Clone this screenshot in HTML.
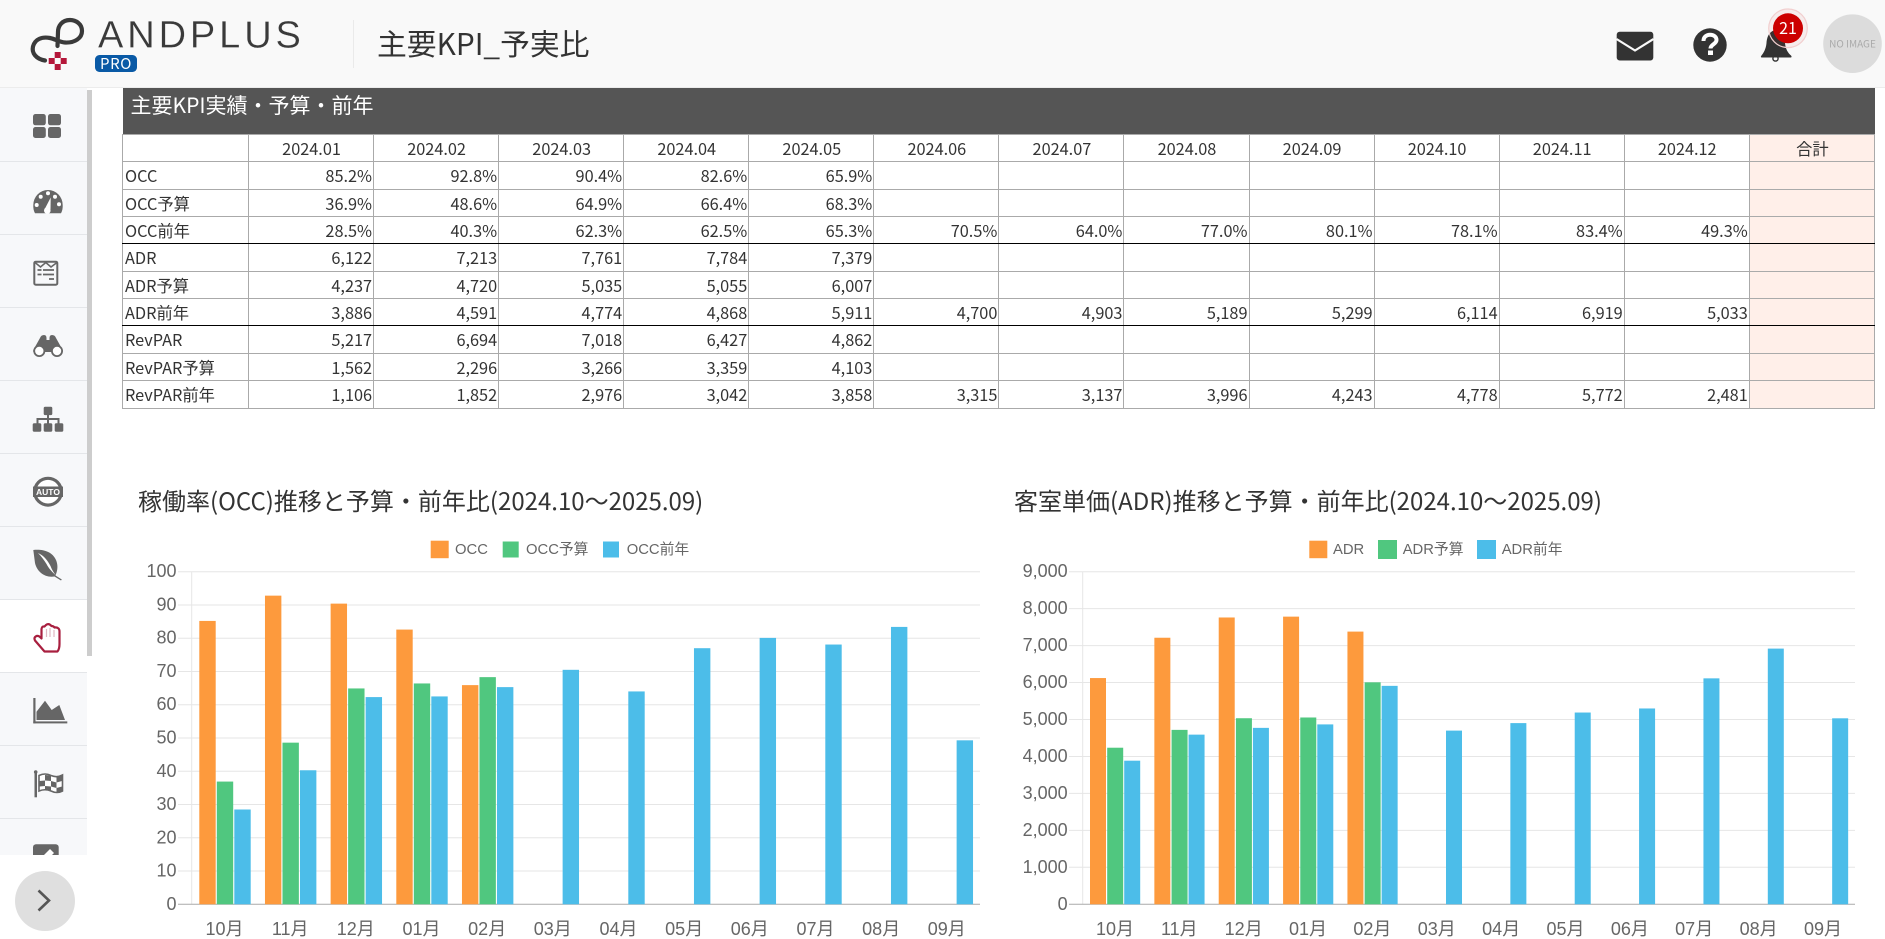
<!DOCTYPE html>
<html lang="ja">
<head>
<meta charset="utf-8">
<title>主要KPI_予実比</title>
<style>
html,body{margin:0;padding:0;width:1885px;height:939px;overflow:hidden;background:#fff}
body{position:relative;font-family:"Noto Sans CJK JP","Liberation Sans",sans-serif;color:#333}
#hdr{position:absolute;left:0;top:0;width:1885px;height:87px;background:#f9f9f9;border-bottom:1px solid #ececec}
#side{position:absolute;left:0;top:88px;width:87px;height:767px;background:#f7f8fa}
.sep{position:absolute;left:0;width:87px;height:1px;background:#e4e6e9}
#active{position:absolute;left:0;top:600px;width:87px;height:72px;background:#fff}
#bar{position:absolute;left:87px;top:90px;width:4.5px;height:566px;background:#cdcdcd}
#ttl{position:absolute;left:122.5px;top:88px;width:1752px;height:46px;background:#555;color:#fff;font-size:21px;line-height:34px;box-sizing:border-box;padding-left:8px}
table{position:absolute;left:122px;top:134px;width:1753px;border-collapse:collapse;table-layout:fixed;font-size:16.3px;color:#333;background:#fff}
td{border:1px solid #aaa;padding:0 1px 1px 2px;text-align:right;white-space:nowrap;line-height:20px;overflow:hidden}
tr.h td{text-align:center}
td:first-child{text-align:left}
td:last-child{background:#ffefe9}
tr.k td{border-bottom:1px solid #000}
svg{position:absolute;left:0;top:0}
.tk{font-family:"Liberation Sans","Noto Sans CJK JP",sans-serif;font-size:18px;fill:#666}
.lg{font-family:"Liberation Sans","Noto Sans CJK JP",sans-serif;font-size:14.8px;fill:#666}
.ct{font-family:"Noto Sans CJK JP","Liberation Sans",sans-serif;font-size:24px;fill:#333}
</style>
</head>
<body>
<div id="hdr"></div>
<div id="side">
<div class="sep" style="top:73px"></div><div class="sep" style="top:146px"></div><div class="sep" style="top:219px"></div><div class="sep" style="top:292px"></div><div class="sep" style="top:365px"></div><div class="sep" style="top:438px"></div><div class="sep" style="top:511px"></div><div class="sep" style="top:584px"></div><div class="sep" style="top:657px"></div><div class="sep" style="top:730px"></div>
</div>
<div id="active"></div>
<div id="bar"></div>
<div id="ttl">主要KPI実績・予算・前年</div>
<table>
<colgroup><col style="width:126px"><col><col><col><col><col><col><col><col><col><col><col><col><col></colgroup>
<tr class="h" style="height:27px"><td></td><td>2024.01</td><td>2024.02</td><td>2024.03</td><td>2024.04</td><td>2024.05</td><td>2024.06</td><td>2024.07</td><td>2024.08</td><td>2024.09</td><td>2024.10</td><td>2024.11</td><td>2024.12</td><td>合計</td></tr>
<tr style="height:28px"><td>OCC</td><td>85.2%</td><td>92.8%</td><td>90.4%</td><td>82.6%</td><td>65.9%</td><td></td><td></td><td></td><td></td><td></td><td></td><td></td><td></td></tr>
<tr style="height:27px"><td>OCC予算</td><td>36.9%</td><td>48.6%</td><td>64.9%</td><td>66.4%</td><td>68.3%</td><td></td><td></td><td></td><td></td><td></td><td></td><td></td><td></td></tr>
<tr class="k" style="height:27px"><td>OCC前年</td><td>28.5%</td><td>40.3%</td><td>62.3%</td><td>62.5%</td><td>65.3%</td><td>70.5%</td><td>64.0%</td><td>77.0%</td><td>80.1%</td><td>78.1%</td><td>83.4%</td><td>49.3%</td><td></td></tr>
<tr style="height:28px"><td>ADR</td><td>6,122</td><td>7,213</td><td>7,761</td><td>7,784</td><td>7,379</td><td></td><td></td><td></td><td></td><td></td><td></td><td></td><td></td></tr>
<tr style="height:27px"><td>ADR予算</td><td>4,237</td><td>4,720</td><td>5,035</td><td>5,055</td><td>6,007</td><td></td><td></td><td></td><td></td><td></td><td></td><td></td><td></td></tr>
<tr class="k" style="height:27px"><td>ADR前年</td><td>3,886</td><td>4,591</td><td>4,774</td><td>4,868</td><td>5,911</td><td>4,700</td><td>4,903</td><td>5,189</td><td>5,299</td><td>6,114</td><td>6,919</td><td>5,033</td><td></td></tr>
<tr style="height:28px"><td>RevPAR</td><td>5,217</td><td>6,694</td><td>7,018</td><td>6,427</td><td>4,862</td><td></td><td></td><td></td><td></td><td></td><td></td><td></td><td></td></tr>
<tr style="height:27px"><td>RevPAR予算</td><td>1,562</td><td>2,296</td><td>3,266</td><td>3,359</td><td>4,103</td><td></td><td></td><td></td><td></td><td></td><td></td><td></td><td></td></tr>
<tr style="height:28px"><td>RevPAR前年</td><td>1,106</td><td>1,852</td><td>2,976</td><td>3,042</td><td>3,858</td><td>3,315</td><td>3,137</td><td>3,996</td><td>4,243</td><td>4,778</td><td>5,772</td><td>2,481</td><td></td></tr>
</table>

<svg width="1885" height="939" viewBox="0 0 1885 939" xmlns="http://www.w3.org/2000/svg">
<!-- logo -->
<path d="M45 60.5C36 59 31.5 53 33 46.5C35 39 42 36.5 50 38C55 39 60 42.5 65 42.5C75 43 82 38 82 31C82 24 76 20 70 20C62 20 58 26 58 32L57.5 46" fill="none" stroke="#3a3a3a" stroke-width="4.2" stroke-linecap="round"/>
<g fill="#b5173a"><rect x="54.7" y="52" width="6" height="6"/><rect x="48.700" y="58" width="6" height="6"/><rect x="60.7" y="58" width="6" height="6"/><rect x="54.7" y="64" width="6" height="6"/></g>
<text x="98" y="47.500" font-family="Liberation Sans,sans-serif" font-size="38" letter-spacing="3.9" fill="#3a3a3a" stroke="#f9f9f9" stroke-width=".25" paint-order="fill stroke">ANDPLUS</text>
<rect x="95" y="55" width="42" height="17" rx="4.5" fill="#0a5aa6"/>
<text x="116" y="69" text-anchor="middle" font-family="Noto Sans CJK JP,sans-serif" font-size="15" letter-spacing=".6" fill="#fff">PRO</text>
<rect x="353" y="20" width="1" height="48" fill="#eaeaea"/>
<text x="377" y="55" font-family="Noto Sans CJK JP,Liberation Sans,sans-serif" font-size="29.8" fill="#333">主要KPI_予実比</text>

<!-- header right -->
<rect x="1616.7" y="31.7" width="36.6" height="28.8" rx="3" fill="#333"/>
<path d="M1616.5 39L1635 50.5L1653.5 39" fill="none" stroke="#f9f9f9" stroke-width="2.2"/>
<circle cx="1710" cy="45" r="16.7" fill="#333"/>
<path d="M1703.5 41C1703.5 36.5 1707 34.7 1710 34.7C1714 34.7 1716.5 37 1716.5 40C1716.5 44 1710.5 44.5 1710.5 48.5" fill="none" stroke="#fff" stroke-width="4"/>
<rect x="1708" y="50.5" width="5" height="4.5" fill="#fff"/>
<path d="M1776 30C1769 31 1767 37 1766.500 43C1766 49 1763.500 53 1761.500 55.500Q1760 57.500 1762 57.500L1790 57.500Q1792.500 57.500 1791 55.500C1788 53 1785.500 49 1785 43C1785 37 1783 31 1776 30Z" fill="#333"/>
<circle cx="1775.5" cy="58.5" r="2.6" fill="none" stroke="#333" stroke-width="1.4"/>
<circle cx="1788" cy="28.3" r="19.3" fill="#c00" fill-opacity=".05" stroke="#f2cfcf" stroke-width="1.2"/>
<circle cx="1788" cy="28.3" r="15" fill="#cc0000"/>
<text x="1788" y="34" text-anchor="middle" font-family="Noto Sans CJK JP,sans-serif" font-size="16" fill="#fff">21</text>
<circle cx="1852.5" cy="43.7" r="29.3" fill="#dcdcdc"/>
<text x="1852.5" y="47.3" text-anchor="middle" font-family="Noto Sans CJK JP,sans-serif" font-size="10" fill="#aaa">NO IMAGE</text>

<!-- side icons -->
<g fill="#666">
<rect x="33" y="114" width="12.8" height="11.3" rx="2.5"/><rect x="48" y="114" width="13" height="11.3" rx="2.5"/><rect x="33" y="127" width="12.8" height="11" rx="2.5"/><rect x="48" y="127" width="13" height="11" rx="2.5"/>
<path d="M35 213.3Q33 209.5 33.3 205A14.7 15 0 0 1 62.7 205Q63 209.5 61 213.3Z"/>
<path d="M33.3 350L40 338Q41 335 44 335Q46.5 335 46.5 338L46.5 340L49.5 340L49.5 338Q49.5 335 52 335Q55 335 56 338L62.7 350L62.7 352L33.3 352Z"/>
<circle cx="39.3" cy="351" r="6"/><circle cx="57" cy="351" r="6"/>
<rect x="43.7" y="406.7" width="8.6" height="8.4" rx="1.5"/><rect x="32.7" y="423.3" width="8.6" height="8.4" rx="1.5"/><rect x="43.7" y="423.3" width="8.6" height="8.4" rx="1.5"/><rect x="54.7" y="423.3" width="8.6" height="8.4" rx="1.5"/>
<path d="M47 415h2v3h10.500v5.500h-2V420H49v3.500h-2V420H38.500v3.500h-2V418H47z"/>
<circle cx="48" cy="491.7" r="15"/>
<path d="M33.3 550C42 549 52 551 56 560C59 567 56.5 573 55.5 575.5L61.8 579.5L61 580.5L54.5 576.5C45 578 37 572 35 563Z"/>
<path d="M36.5 720V711.7L45 700.7L51.7 710L59.3 705L65 720Z"/>
<rect x="33.3" y="698" width="2.2" height="25.3"/><rect x="33.3" y="721.4" width="34" height="2"/>
<rect x="34.5" y="772" width="2.5" height="25.3"/><circle cx="35.7" cy="772" r="1.8"/>
<rect x="33" y="844.3" width="25.7" height="18" rx="3"/>
</g>
<g fill="#fff">
<circle cx="40.7" cy="196.7" r="2"/><circle cx="48" cy="193.3" r="2"/><circle cx="55" cy="196.7" r="2"/><circle cx="36.7" cy="205" r="2"/><circle cx="59" cy="204.3" r="2"/>
<path d="M50.7 197.5L50.5 209.500L44.500 209.500Z"/><circle cx="47.3" cy="210.500" r="3.300"/>
<circle cx="39.3" cy="351" r="4.2"/><circle cx="57" cy="351" r="4.2"/>
<circle cx="48" cy="491.7" r="11.8"/>
<path d="M38 553C44 555.500 48 561 50.500 566C52 570 54 573 55.700 575C52 572 48.500 568 46.500 564C44 560 41 556 38 553Z"/>
<path d="M42 857l8-8 4 4-8 8z"/>
</g>
<rect x="33" y="486.5" width="30" height="10.5" fill="#666"/>
<text x="48" y="495" text-anchor="middle" font-family="Liberation Sans,sans-serif" font-weight="bold" font-size="8.5" fill="#fff">AUTO</text>
<!-- flag -->
<path d="M39 775.500Q45 772.500 51 775.500Q57 778 62.500 775V791Q57 794 51 791Q45 788.500 39 791Z" fill="#fff" stroke="#666" stroke-width="1.600"/>
<path d="M45 775L51 775.500V781L45 780.500ZM56.500 777L62 775.500V781L56.500 782.500ZM39.500 781L45 780.500V786L39.500 786.500ZM51 781L56.500 782.500V788L51 786.500ZM45 786L51 786.500V791L45 790ZM56.500 788L62 786.500V791L56.500 792.500Z" fill="#666"/>
<!-- form icon -->
<rect x="34.3" y="261.7" width="23" height="23" rx="1.5" fill="none" stroke="#666" stroke-width="2"/>
<path d="M35 262.5L40.500 267L45.800 262.500L51 267L57 262.500" fill="none" stroke="#666" stroke-width="1.6"/>
<path d="M37.5 270h4M43 270h11M37.5 274.5h4M43 274.5h11M49 279h5" stroke="#666" stroke-width="1.8" fill="none"/>
<!-- hand -->
<path d="M44.5 651.5L35 640.5Q33.5 637.5 36.5 636Q39 635.5 41 638L41.5 638.5V629Q42 626 44.5 626.5L46 625Q48 623.5 50 624.7L51.5 626Q53.5 626 54.5 627.5Q57 627 58.5 628.5Q59.5 629.5 59.5 631.5V644Q59.5 649 57.5 651.5Z" fill="#fff" stroke="#a81f3f" stroke-width="2.2" stroke-linejoin="round"/>
<path d="M46.5 629v8M50 628v9M54 630v7" stroke="#e0b8c2" stroke-width="1.2" fill="none"/>

<!-- white bottom -->
<rect x="0" y="855" width="87" height="84" fill="#fff"/>
<circle cx="45" cy="901" r="30" fill="#dfdfdf"/>
<path d="M38.5 890.5L49 900.5L38.5 910.5" fill="none" stroke="#555" stroke-width="2.6"/>

<!-- chart 1 -->
<text class="ct" x="138" y="510">稼働率(OCC)推移と予算・前年比(2024.10～2025.09)</text>
<rect x="430.7" y="540.7" width="18" height="17.5" fill="#fd9a3d"/>
<text class="lg" x="455" y="554">OCC</text>
<rect x="502.7" y="541.5" width="16" height="16" fill="#50c77f"/>
<text class="lg" x="526" y="554">OCC予算</text>
<rect x="603" y="541.5" width="16" height="16" fill="#4cbde9"/>
<text class="lg" x="626.7" y="554">OCC前年</text>
<g stroke="#e6e6e6" stroke-width="1" fill="none">
<path d="M178 571.7H980M178 605H980M178 638.2H980M178 671.5H980M178 704.7H980M178 738H980M178 771.3H980M178 804.5H980M178 837.8H980M178 871H980M191.7 571.7V904.3"/>
</g>
<path d="M178 904.3H980" stroke="#aaa" stroke-width="1"/>
<g class="tk" text-anchor="end">
<text x="176.5" y="577.2">100</text><text x="176.5" y="610.5">90</text><text x="176.5" y="643.7">80</text><text x="176.5" y="677">70</text><text x="176.5" y="710.2">60</text><text x="176.5" y="743.5">50</text><text x="176.5" y="776.8">40</text><text x="176.5" y="810">30</text><text x="176.5" y="843.3">20</text><text x="176.5" y="876.5">10</text><text x="176.5" y="909.8">0</text>
</g>
<g class="tk" text-anchor="middle">
<text x="224.5" y="935">10月</text><text x="290.2" y="935">11月</text><text x="355.8" y="935">12月</text><text x="421.5" y="935">01月</text><text x="487.2" y="935">02月</text><text x="552.8" y="935">03月</text><text x="618.5" y="935">04月</text><text x="684.2" y="935">05月</text><text x="749.8" y="935">06月</text><text x="815.5" y="935">07月</text><text x="881.2" y="935">08月</text><text x="946.8" y="935">09月</text>
</g>
<g transform="translate(199.3,904.3) scale(1,-3.326)">
<g fill="#fd9a3d">
<rect x="0" width="16.4" height="85.2"/><rect x="65.67" width="16.4" height="92.8"/><rect x="131.33" width="16.4" height="90.4"/><rect x="197" width="16.4" height="82.6"/><rect x="262.67" width="16.4" height="65.9"/>
</g>
<g fill="#50c77f" transform="translate(17.5,0)">
<rect x="0" width="16.4" height="36.9"/><rect x="65.67" width="16.4" height="48.6"/><rect x="131.33" width="16.4" height="64.9"/><rect x="197" width="16.4" height="66.4"/><rect x="262.67" width="16.4" height="68.3"/>
</g>
<g fill="#4cbde9" transform="translate(35,0)">
<rect x="0" width="16.4" height="28.5"/><rect x="65.67" width="16.4" height="40.3"/><rect x="131.33" width="16.4" height="62.3"/><rect x="197" width="16.4" height="62.5"/><rect x="262.67" width="16.4" height="65.3"/><rect x="328.33" width="16.4" height="70.5"/><rect x="394" width="16.4" height="64"/><rect x="459.67" width="16.4" height="77"/><rect x="525.33" width="16.4" height="80.1"/><rect x="591" width="16.4" height="78.1"/><rect x="656.67" width="16.4" height="83.4"/><rect x="722.33" width="16.4" height="49.3"/>
</g>
</g>

<!-- chart 2 -->
<text class="ct" x="1014" y="510">客室単価(ADR)推移と予算・前年比(2024.10～2025.09)</text>
<rect x="1309.3" y="540.7" width="18" height="17.5" fill="#fd9a3d"/>
<text class="lg" x="1333" y="554">ADR</text>
<rect x="1378" y="540" width="19" height="19" fill="#50c77f"/>
<text class="lg" x="1402.7" y="554">ADR予算</text>
<rect x="1477" y="540" width="19" height="19" fill="#4cbde9"/>
<text class="lg" x="1501.7" y="554">ADR前年</text>
<g stroke="#e6e6e6" stroke-width="1" fill="none">
<path d="M1069 571.7H1855M1069 608.6H1855M1069 645.6H1855M1069 682.5H1855M1069 719.5H1855M1069 756.5H1855M1069 793.4H1855M1069 830.4H1855M1069 867.3H1855M1082.7 571.7V904.3"/>
</g>
<path d="M1069 904.3H1855" stroke="#aaa" stroke-width="1"/>
<g class="tk" text-anchor="end">
<text x="1067.7" y="577.2">9,000</text><text x="1067.7" y="614.1">8,000</text><text x="1067.7" y="651.1">7,000</text><text x="1067.7" y="688">6,000</text><text x="1067.7" y="725">5,000</text><text x="1067.7" y="762">4,000</text><text x="1067.7" y="798.9">3,000</text><text x="1067.7" y="835.9">2,000</text><text x="1067.7" y="872.8">1,000</text><text x="1067.7" y="909.8">0</text>
</g>
<g class="tk" text-anchor="middle">
<text x="1115" y="935">10月</text><text x="1179.3" y="935">11月</text><text x="1243.7" y="935">12月</text><text x="1308" y="935">01月</text><text x="1372.4" y="935">02月</text><text x="1436.8" y="935">03月</text><text x="1501.2" y="935">04月</text><text x="1565.5" y="935">05月</text><text x="1629.9" y="935">06月</text><text x="1694.2" y="935">07月</text><text x="1758.6" y="935">08月</text><text x="1823" y="935">09月</text>
</g>
<g transform="translate(1090,904.3) scale(1,-0.036956)">
<g fill="#fd9a3d">
<rect x="0" width="16" height="6122"/><rect x="64.36" width="16" height="7213"/><rect x="128.72" width="16" height="7761"/><rect x="193.08" width="16" height="7784"/><rect x="257.44" width="16" height="7379"/>
</g>
<g fill="#50c77f" transform="translate(17.2,0)">
<rect x="0" width="16" height="4237"/><rect x="64.36" width="16" height="4720"/><rect x="128.72" width="16" height="5035"/><rect x="193.08" width="16" height="5055"/><rect x="257.44" width="16" height="6007"/>
</g>
<g fill="#4cbde9" transform="translate(34.2,0)">
<rect x="0" width="16" height="3886"/><rect x="64.36" width="16" height="4591"/><rect x="128.72" width="16" height="4774"/><rect x="193.08" width="16" height="4868"/><rect x="257.44" width="16" height="5911"/><rect x="321.8" width="16" height="4700"/><rect x="386.16" width="16" height="4903"/><rect x="450.52" width="16" height="5189"/><rect x="514.88" width="16" height="5299"/><rect x="579.24" width="16" height="6114"/><rect x="643.6" width="16" height="6919"/><rect x="707.96" width="16" height="5033"/>
</g>
</g>
</svg>
</body>
</html>
